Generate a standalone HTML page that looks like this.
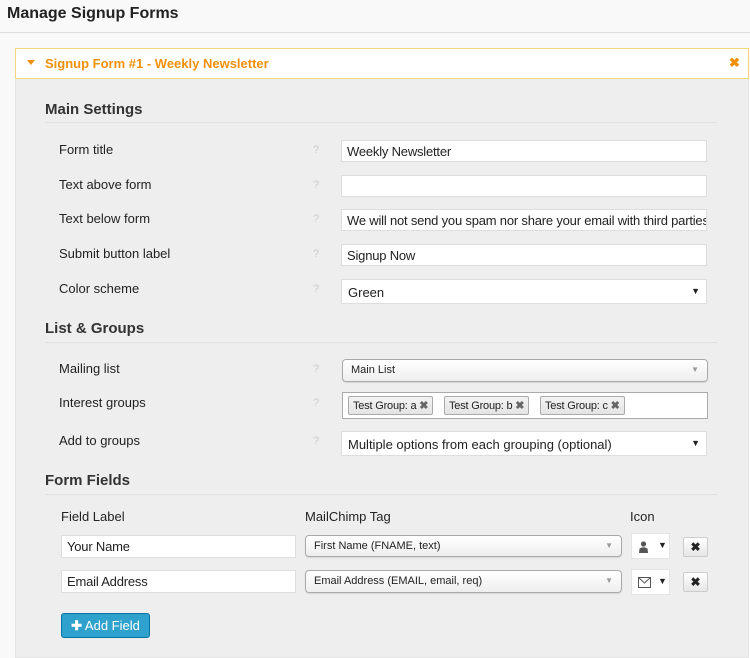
<!DOCTYPE html>
<html><head><style>
*{box-sizing:border-box;margin:0;padding:0}
body{width:750px;height:648px;background:#f9f9f9;font-family:"Liberation Sans",sans-serif;font-size:13px;color:#222;position:relative;overflow:hidden}
.a{position:absolute}
.h1{left:7px;top:5px;font-size:16px;font-weight:bold;color:#222}
.hr{left:0;top:32px;width:750px;height:1px;background:#ddd}
.panel{left:15px;top:48px;width:734px;height:610px;background:#eee;border:1px solid #e6e6e6}
.ph{left:15px;top:48px;width:734px;height:31px;background:#fff;border:1px solid #f3d57a}
.sec{left:45px;font-size:15px;font-weight:bold;color:#333}
.line{left:45px;width:672px;height:2px;background:linear-gradient(#ddd,#f3f3f3)}
.lab{left:59px;font-size:13px;color:#222}
.q{left:313px;font-size:11px;color:#ccc}
.in{left:341px;width:366px;height:22px;background:#fff;border:1px solid #ddd;font-size:13px;padding:3px 5px;white-space:nowrap;overflow:hidden;letter-spacing:-0.2px}
.sel{background:#fff;border:1px solid #ddd;font-size:13px;padding:5px 6px}
.rs{border:1px solid #aaa;border-radius:4px;background:linear-gradient(#fff,#eee);font-size:11px;padding:4px 8px;box-shadow:0 1px 1px rgba(0,0,0,.1)}
.tag{top:396px;height:19px;border:1px solid #aaa;border-radius:2px;background:linear-gradient(#f4f4f4,#e4e4e4);font-size:11px;padding:2px 4px;letter-spacing:-0.2px}
.xb{left:683px;width:25px;height:20px;border:1px solid #ccc;border-radius:2px;background:linear-gradient(#fff,#e6e6e6);font-size:12px;font-weight:bold;text-align:center;line-height:18px}
</style></head><body>
<div class="a h1">Manage Signup Forms</div>
<div class="a hr"></div>
<div class="a panel"></div>
<div class="a ph"></div>
<div class="a" style="left:27px;top:60px;width:0;height:0;border-left:4px solid transparent;border-right:4px solid transparent;border-top:5px solid #f0900b"></div>
<div class="a" style="left:45px;top:56px;font-size:13px;font-weight:bold;color:#f0900b">Signup Form #1 - Weekly Newsletter</div>
<div class="a" style="left:729px;top:55px;font-size:13px;font-weight:bold;color:#f0900b">✖</div>

<div class="a sec" style="top:101px">Main Settings</div>
<div class="a line" style="top:122px"></div>
<div class="a lab" style="top:142px">Form title</div><div class="a q" style="top:144px">?</div>
<div class="a in" style="top:140px">Weekly Newsletter</div>
<div class="a lab" style="top:177px">Text above form</div><div class="a q" style="top:179px">?</div>
<div class="a in" style="top:175px"></div>
<div class="a lab" style="top:211px">Text below form</div><div class="a q" style="top:213px">?</div>
<div class="a in" style="top:209px">We will not send you spam nor share your email with third parties</div>
<div class="a lab" style="top:246px">Submit button label</div><div class="a q" style="top:248px">?</div>
<div class="a in" style="top:244px">Signup Now</div>
<div class="a lab" style="top:281px">Color scheme</div><div class="a q" style="top:283px">?</div>
<div class="a sel" style="left:341px;top:279px;width:366px;height:25px">Green<span style="position:absolute;right:6px;top:6px;font-size:9px">▼</span></div>

<div class="a sec" style="top:320px">List &amp; Groups</div>
<div class="a line" style="top:342px"></div>
<div class="a lab" style="top:361px">Mailing list</div><div class="a q" style="top:363px">?</div>
<div class="a rs" style="left:342px;top:359px;width:366px;height:23px">Main List<span style="position:absolute;right:8px;top:5px;font-size:8px;color:#999">▼</span></div>
<div class="a lab" style="top:395px">Interest groups</div><div class="a q" style="top:397px">?</div>
<div class="a" style="left:342px;top:392px;width:366px;height:27px;background:#fff;border:1px solid #aaa"></div>
<div class="a tag" style="left:348px">Test Group: a <b style="color:#666">✖</b></div>
<div class="a tag" style="left:444px">Test Group: b <b style="color:#666">✖</b></div>
<div class="a tag" style="left:540px">Test Group: c <b style="color:#666">✖</b></div>
<div class="a lab" style="top:433px">Add to groups</div><div class="a q" style="top:435px">?</div>
<div class="a sel" style="left:341px;top:431px;width:366px;height:25px">Multiple options from each grouping (optional)<span style="position:absolute;right:6px;top:6px;font-size:9px">▼</span></div>

<div class="a sec" style="top:472px">Form Fields</div>
<div class="a line" style="top:494px"></div>
<div class="a" style="left:61px;top:509px">Field Label</div>
<div class="a" style="left:305px;top:509px">MailChimp Tag</div>
<div class="a" style="left:630px;top:509px">Icon</div>

<div class="a in" style="left:61px;top:535px;width:235px;height:23px">Your Name</div>
<div class="a rs" style="left:305px;top:535px;width:317px;height:22px;padding:4px 8px">First Name (FNAME, text)<span style="position:absolute;right:8px;top:5px;font-size:8px;color:#999">▼</span></div>
<div class="a" style="left:631px;top:533px;width:39px;height:26px;background:#fff;border:1px solid #e4e4e4"><svg class="a" style="left:6px;top:7px" width="11" height="12" viewBox="0 0 11 12"><circle cx="5.5" cy="3" r="2.6" fill="#555"/><path d="M1 12 L1.5 7.5 Q5.5 5 9.5 7.5 L10 12Z" fill="#555"/></svg><span class="a" style="left:26px;top:6px;font-size:9px">▼</span></div>
<div class="a xb" style="top:537px">✖</div>

<div class="a in" style="left:61px;top:570px;width:235px;height:23px">Email Address</div>
<div class="a rs" style="left:305px;top:570px;width:317px;height:23px;padding:4px 8px">Email Address (EMAIL, email, req)<span style="position:absolute;right:8px;top:5px;font-size:8px;color:#999">▼</span></div>
<div class="a" style="left:631px;top:569px;width:39px;height:26px;background:#fff;border:1px solid #e4e4e4"><svg class="a" style="left:6px;top:7px" width="13" height="11" viewBox="0 0 13 11"><rect x=".5" y=".5" width="12" height="10" fill="none" stroke="#555"/><path d="M.5 .5 L6.5 6 L12.5 .5" fill="none" stroke="#555"/></svg><span class="a" style="left:26px;top:6px;font-size:9px">▼</span></div>
<div class="a xb" style="top:572px">✖</div>

<div class="a" style="left:61px;top:613px;width:89px;height:25px;background:#2ea2cc;border:1px solid #0074a2;border-radius:3px;color:#fff;font-size:13px;line-height:23px;text-align:center"><b>✚</b> Add Field</div>
</body></html>
